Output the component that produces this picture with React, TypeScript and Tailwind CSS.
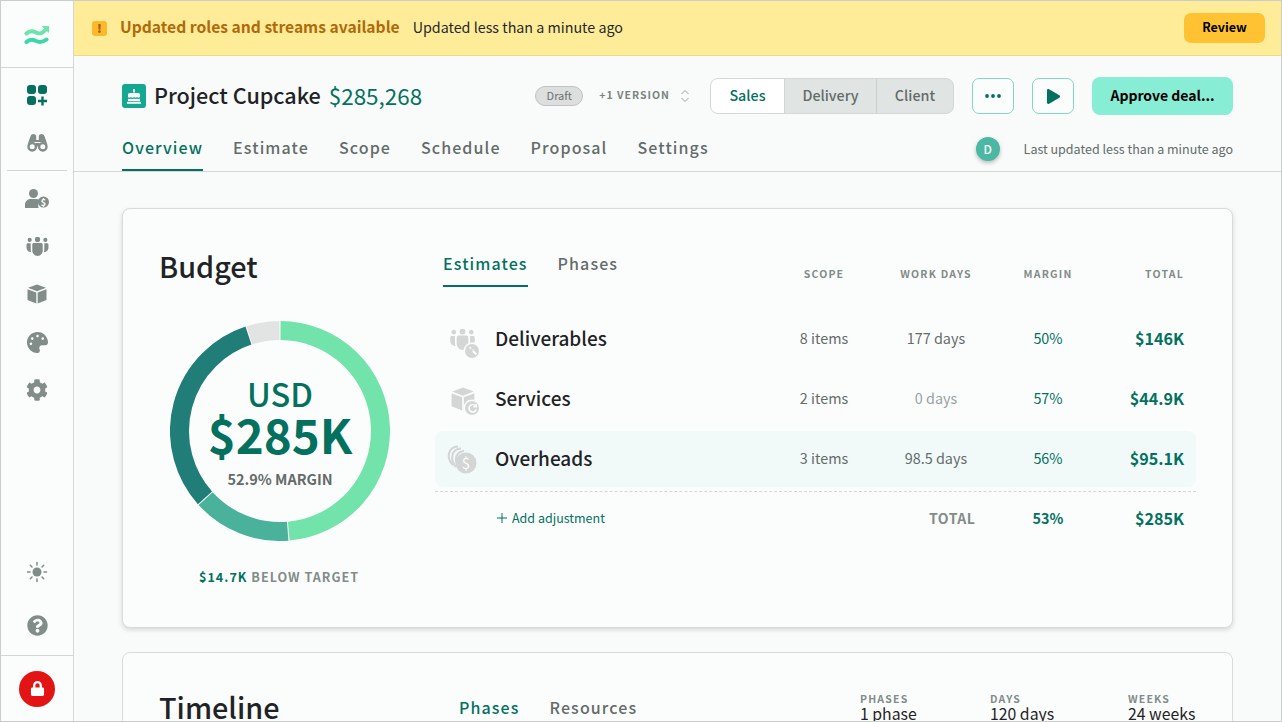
import type { ReactNode } from "react";
import { FaCog, FaExclamation, FaLock, FaPalette, FaPlay, FaQuestionCircle } from "react-icons/fa";

const font = "font-['Noto_Sans_CJK_SC','Noto_Sans',sans-serif]";

function LogoMark() {
  return (
    <svg width="26" height="22" viewBox="0 0 26 22" fill="none" strokeWidth="4" strokeLinecap="round">
      <path d="M2.500 8.500c3-3 5.500-3 9-1.200s6 1.800 9.500-2" stroke="#6fe3ad" />
      <path d="M17.500 1h7.500v7z" fill="#6fe3ad" />
      <path d="M2.500 17c3-3 5.500-3 9-1.200s7 1.800 11-1.300" stroke="#3fd6a9" />
    </svg>
  );
}

function AppsPlus() {
  return (
    <svg width="22" height="22" viewBox="0 0 22 22" fill="#04715f">
      <rect x="1" y="1" width="9" height="9" rx="3" />
      <rect x="12" y="1" width="9" height="9" rx="3" />
      <rect x="1" y="12" width="9" height="9" rx="3" />
      <path d="M15.300 12.500h2.400v3.300h3.300v2.400h-3.300v3.300h-2.400v-3.300H12v-2.400h3.300z" />
    </svg>
  );
}

function Binoculars() {
  return (
    <svg width="21" height="18" viewBox="0 0 21 18" fill="currentColor">
      <path d="M3.500 2.200C4 .8 5.200 0 6.500 0c1.500 0 2.700 1 2.700 2.500V6h2.600V2.500C11.800 1 13 0 14.500 0c1.300 0 2.500.8 3 2.200l2.900 8.300-3.900-2.500h-12L.6 10.500z" />
      <circle cx="5.200" cy="12.800" r="3.700" fill="none" stroke="currentColor" strokeWidth="2.400" />
      <circle cx="15.800" cy="12.800" r="3.700" fill="none" stroke="currentColor" strokeWidth="2.400" />
      <rect x="8.500" y="9" width="4" height="3.500" />
    </svg>
  );
}

function UserDollar() {
  return (
    <svg width="25" height="19" viewBox="0 0 25 19" fill="currentColor">
      <circle cx="8.500" cy="4.500" r="4.500" />
      <path d="M0 19v-3.500C0 12.500 2.500 10 5.500 10h6c1.700 0 3 .7 4 1.800-1.800 1.500-2.800 4.300-2 7.200z" />
      <circle cx="18.500" cy="13" r="5.500" />
      <text x="18.500" y="16.500" textAnchor="middle" fontSize="9" fontWeight="700" fill="#fff">$</text>
    </svg>
  );
}

function Team({ className }: { className: string }) {
  return (
    <svg className={className} viewBox="0 0 22 18" fill="currentColor">
      <circle cx="3.500" cy="2.700" r="2" />
      <circle cx="11" cy="2.200" r="2.500" />
      <circle cx="18.500" cy="2.700" r="2" />
      <path d="M.5 7.500C.5 6.500 1 6 2 6h2.500v6c0 1 .2 1.800.5 2.500C2.500 14.500.5 12.500.5 10z" />
      <path d="M21.500 7.500c0-1-.5-1.500-1.500-1.500h-2.500v6c0 1-.2 1.800-.5 2.500 2.500 0 4.500-2 4.500-4.500z" />
      <path d="M6 7.300C6 6.200 6.700 5.600 7.800 5.600h6.400c1.100 0 1.800.6 1.800 1.700v5.200c0 3-2.200 5.500-5 5.500s-5-2.500-5-5.500z" />
    </svg>
  );
}

function Cube({ className }: { className: string }) {
  return (
    <svg className={className} viewBox="0 0 20 20" fill="currentColor">
      <path d="M10 .5 19 3.800 10 7.200 1 3.800z" />
      <path d="M.5 5.200 9.300 8.600v10.900L.5 16.100z" />
      <path d="M19.500 5.200 10.700 8.600v10.900l8.800-3.400z" />
    </svg>
  );
}

function Sun() {
  return (
    <svg width="22" height="22" viewBox="0 0 22 22" fill="currentColor" stroke="currentColor" strokeWidth="1.500" strokeLinecap="round">
      <circle cx="11" cy="11" r="4.500" stroke="none" />
      <path d="M11 1.500v2.500M11 18v2.500M1.500 11H4M18 11h2.500M4.300 4.300 6 6M16 16l1.700 1.700M4.300 17.700 6 16M16 6l1.700-1.700" />
    </svg>
  );
}

function CakeIcon() {
  return (
    <svg width="14" height="16" viewBox="0 0 14 16" fill="#fff">
      <rect x="6.200" y="1" width="1.600" height="3.500" />
      <path d="M2.500 5h9A1.500 1.500 0 0 1 13 6.500V9c-1 .9-2 .9-3 0-1 .9-2 .9-3 0-1 .9-2 .9-3 0-1 .9-2 .9-3 0V6.500A1.500 1.500 0 0 1 2.500 5z" />
      <path d="M1 10.500c1 .7 2 .7 3 0 1 .7 2 .7 3 0 1 .7 2 .7 3 0 1 .7 2 .7 3 0V13H1z" />
      <rect x="0" y="13.800" width="14" height="2" rx=".5" />
    </svg>
  );
}

function NavIcon({ children, gap }: { children: ReactNode; gap: string }) {
  return <div className={`flex h-6 items-center justify-center text-[#828c89] ${gap}`}>{children}</div>;
}

function Sidebar() {
  return (
    <aside className="flex w-[73px] shrink-0 flex-col border-r border-[#d3d7d6] bg-[#fbfdfc]">
      <div className="flex h-[67px] items-center justify-center border-b border-[#d3d7d6] pt-[4px]">
        <LogoMark />
      </div>
      <div className="flex h-[39px] items-start justify-center pt-[16px]">
        <AppsPlus />
      </div>
      <NavIcon gap="mt-[24px]">
        <Binoculars />
      </NavIcon>
      <div className="mx-[6px] mt-[15px] border-t border-[#d3d7d6]" />
      <NavIcon gap="mt-[15px]">
        <UserDollar />
      </NavIcon>
      <NavIcon gap="mt-[24px]">
        <Team className="h-[19px] w-[23px]" />
      </NavIcon>
      <NavIcon gap="mt-[24px]">
        <Cube className="h-[20px] w-[20px]" />
      </NavIcon>
      <NavIcon gap="mt-[24px]">
        <FaPalette className="text-[21px]" />
      </NavIcon>
      <NavIcon gap="mt-[24px]">
        <FaCog className="text-[22px]" />
      </NavIcon>
      <div className="mt-auto">
        <NavIcon gap="">
          <Sun />
        </NavIcon>
        <NavIcon gap="mt-[29px] mb-[18px]">
          <FaQuestionCircle className="text-[21px]" />
        </NavIcon>
        <div className="flex h-[66px] items-center justify-center border-t border-[#d3d7d6]">
          <span className="flex h-9 w-9 items-center justify-center rounded-full bg-[#e31414]">
            <FaLock className="text-[15px] text-white" />
          </span>
        </div>
      </div>
    </aside>
  );
}

function Banner() {
  return (
    <div className="flex h-[55px] shrink-0 items-center border-b border-[#ecd98a] bg-[#ffec99] pl-[18px] pr-[16px]">
      <span className="flex h-[15px] w-[15px] items-center justify-center rounded-[3px] bg-[#fdb92e]">
        <FaExclamation className="text-[9px] text-[#a8610a]" />
      </span>
      <span className="mb-[2px] ml-[13px] text-[15.650px] font-bold leading-6 text-[#b06a0a]">Updated roles and streams available</span>
      <span className="mb-[2px] ml-[13px] text-[14.300px] leading-6 text-[#24282a]">Updated less than a minute ago</span>
      <button className="ml-auto h-[30px] w-[81px] rounded-[7px] bg-[#ffc233] pb-[2px] text-[12.500px] font-bold leading-none text-black">
        Review
      </button>
    </div>
  );
}

function Header() {
  const tabs = ["Estimate", "Scope", "Schedule", "Proposal", "Settings"];
  return (
    <div className="shrink-0 border-b border-[#d3d7d6] bg-[#f8fbfa] px-[48px]">
      <div className="flex h-[74px] items-center pt-[6px]">
        <span className="flex h-6 w-6 items-center justify-center rounded-[3px] bg-[#14a892]">
          <CakeIcon />
        </span>
        <span className="mb-[2px] ml-2 text-[21.600px] font-medium leading-8 text-[#1f2326]">Project Cupcake</span>
        <span className="mb-[2px] ml-[8px] text-[22.400px] leading-8 text-[#04715f]">$285,268</span>
        <span className="ml-auto flex h-5 w-[48px] items-center justify-center rounded-full border border-[#bfc4c3] bg-[#dcdfde] pb-[2px] text-[11px] leading-none text-[#6a7270]">
          Draft
        </span>
        <span className="mb-[2px] ml-[16px] text-[10.500px] font-bold leading-none tracking-[1px] text-[#7b8482]">+1 VERSION</span>
        <svg className="ml-[10px]" width="10" height="14" viewBox="0 0 10 14" fill="none" stroke="#9aa2a0" strokeWidth="1">
          <path d="M1.500 5 5 1.500 8.500 5M1.500 9 5 12.500 8.500 9" />
        </svg>
        <div className="ml-[20px] flex h-9 w-[244px] overflow-hidden rounded-[8px] border border-[#d3d7d6] bg-[#e0e4e3] text-[14.300px] font-medium leading-none">
          <span className="flex w-[73px] items-center justify-center bg-white pb-[2px] text-[#04715f]">Sales</span>
          <span className="flex w-[92px] items-center justify-center border-l border-[#d3d7d6] pb-[2px] text-[#646c6a]">Delivery</span>
          <span className="flex flex-1 items-center justify-center border-l border-[#c9cecc] pb-[2px] text-[#646c6a]">Client</span>
        </div>
        <button className="ml-[18px] flex h-9 w-[42px] items-center justify-center rounded-[7px] border border-[#7ed9c2] bg-[#fbfdfc]">
          <svg width="16" height="4" viewBox="0 0 16 4" fill="#04715f">
            <circle cx="2" cy="2" r="1.900" />
            <circle cx="8" cy="2" r="1.900" />
            <circle cx="14" cy="2" r="1.900" />
          </svg>
        </button>
        <button className="ml-[18px] flex h-9 w-[42px] items-center justify-center rounded-[7px] border border-[#7ed9c2] bg-[#fbfdfc] text-[#04715f]">
          <FaPlay className="text-[15px]" />
        </button>
        <button className="ml-[18px] h-[38px] w-[141px] rounded-[8px] bg-[#88edd5] pb-[2px] text-[14px] font-bold leading-none text-black">
          Approve deal...
        </button>
      </div>
      <div className="flex h-[41px] items-start">
        <span className="h-[41px] border-b-[2px] border-[#04715f] pt-[5px] text-[16px] font-medium leading-6 tracking-[1.100px] text-[#04715f]">
          Overview
        </span>
        {tabs.map((t) => (
          <span key={t} className="ml-[30px] pt-[5px] text-[16px] font-medium leading-6 tracking-[1.100px] text-[#646c6a]">
            {t}
          </span>
        ))}
        <span className="ml-auto mt-[7px] flex h-6 w-6 items-center justify-center rounded-full bg-[#4bb8a3] text-[12px] font-medium leading-none text-white shadow-[0_2px_4px_rgba(0,0,0,0.25)]">
          D
        </span>
        <span className="ml-[24px] pt-[7px] text-[12.500px] leading-6 text-[#646c6a]">Last updated less than a minute ago</span>
      </div>
    </div>
  );
}

function arc(from: number, to: number) {
  const r = 100.5;
  const pt = (a: number) => {
    const rad = ((a - 90) * Math.PI) / 180;
    return `${110 + r * Math.cos(rad)} ${110 + r * Math.sin(rad)}`;
  };
  return `M${pt(from)}A${r} ${r} 0 ${to - from > 180 ? 1 : 0} 1 ${pt(to)}`;
}

function Donut() {
  const parts = [
    { from: 0, to: 175.3, color: "#72e3aa" },
    { from: 175.3, to: 228, color: "#4ab19a" },
    { from: 228, to: 342, color: "#207d78" },
    { from: 342, to: 360, color: "#e2e4e3" },
  ];
  return (
    <div className="relative h-[220px] w-[220px]">
      <svg width="220" height="220" viewBox="0 0 220 220" fill="none" strokeWidth="19">
        {parts.map((p) => (
          <path key={p.from} d={arc(p.from + 0.3, p.to - 0.3)} stroke={p.color} />
        ))}
      </svg>
      <div className="absolute inset-0 flex flex-col items-center pt-[53px]">
        <span className="text-[32.500px] font-medium leading-[38px] text-[#04715f]">USD</span>
        <span className="mt-[-6px] text-[47.500px] font-bold leading-[56px] text-[#04715f]">$285K</span>
        <span className="mt-[7px] text-[14.500px] font-bold leading-5 text-[#646c6a]">52.9% MARGIN</span>
      </div>
    </div>
  );
}

function Coins() {
  return (
    <svg width="31" height="29" viewBox="0 0 31 29" fill="none">
      <path d="M7 20C-1 12 3 2 12 1.500M10 22C3 14 6 4 15 3.500M13 23C7 15 10 7 18 6" stroke="#d3d6d5" strokeWidth="2" />
      <circle cx="20" cy="18" r="10.500" fill="#d3d6d5" />
      <text x="20" y="23.500" textAnchor="middle" fontSize="15" fill="#fff">$</text>
    </svg>
  );
}

function Wrench() {
  return (
    <svg className="h-[11px] w-[11px]" viewBox="0 0 12 12" fill="#fff">
      <path d="M2 3.500a2.500 2.500 0 0 1 3-1.500L4 3.500 5.500 5 7 4a2.500 2.500 0 0 1-1.500 3L9.500 11 11 9.500 7 5.500z" />
    </svg>
  );
}

function Refresh() {
  return (
    <svg className="h-[11px] w-[11px]" viewBox="0 0 12 12" fill="none" stroke="#fff" strokeWidth="1.600">
      <path d="M9.500 3.500A4 4 0 1 0 10 7" />
      <path d="M10 1v3H7" />
    </svg>
  );
}

function IconBadge({ children, pos }: { children: ReactNode; pos: string }) {
  return (
    <span className={`absolute flex h-[14px] w-[14px] items-center justify-center rounded-full bg-[#d3d6d5] ring-[1.500px] ring-[#fbfdfc] ${pos}`}>
      {children}
    </span>
  );
}

const rows = [
  {
    name: "Deliverables",
    scope: "8 items",
    days: "177 days",
    margin: "50%",
    total: "$146K",
    icon: (
      <>
        <Team className="ml-[3px] h-[21px] w-[27px]" />
        <IconBadge pos="right-[-2px] bottom-[-8px]">
          <Wrench />
        </IconBadge>
      </>
    ),
  },
  {
    name: "Services",
    scope: "2 items",
    days: "0 days",
    margin: "57%",
    total: "$44.9K",
    dim: true,
    icon: (
      <>
        <Cube className="ml-[4px] h-[24px] w-[24px]" />
        <IconBadge pos="right-[-2px] bottom-[-4px]">
          <Refresh />
        </IconBadge>
      </>
    ),
  },
  { name: "Overheads", scope: "3 items", days: "98.5 days", margin: "56%", total: "$95.1K", active: true, icon: <Coins /> },
];

const grid = "grid grid-cols-[333px_112px_112px_112px_1fr] items-center pr-3";

function Budget() {
  return (
    <section className="flex h-[420px] rounded-[8px] border border-[#d8dbda] bg-[#fbfdfc] shadow-[0_2px_5px_rgba(0,0,0,0.14)]">
      <div className="flex w-[312px] shrink-0 flex-col pl-[36px] pt-[37px]">
        <h2 className="text-[28.800px] font-medium leading-10 text-[#1f2326]">Budget</h2>
        <div className="ml-[11px] mt-[35px]">
          <Donut />
        </div>
        <p className="ml-[40px] mt-[28px] text-[12.600px] font-bold leading-4 tracking-[1px] text-[#828c89]">
          <span className="text-[#04715f]">$14.7K</span> BELOW TARGET
        </p>
      </div>
      <div className="w-[761px] shrink-0">
        <div className={`${grid} h-[78px]`}>
          <div className="flex h-full items-end pl-2">
            <span className="border-b-[2px] border-[#04715f] pb-[10px] text-[16px] font-medium leading-6 tracking-[1.100px] text-[#04715f]">Estimates</span>
            <span className="ml-[30px] pb-[12px] text-[16px] font-medium leading-6 tracking-[1.100px] text-[#646c6a]">Phases</span>
          </div>
          {["SCOPE", "WORK DAYS", "MARGIN"].map((h) => (
            <span key={h} className="pt-[52px] text-center text-[10.500px] font-bold leading-4 tracking-[1.200px] text-[#828c89]">
              {h}
            </span>
          ))}
          <span className="pt-[52px] text-right text-[10.500px] font-bold leading-4 tracking-[1.200px] text-[#828c89]">TOTAL</span>
        </div>
        <div className="mt-[24px] flex flex-col gap-1">
          {rows.map((r) => (
            <div key={r.name} className={`${grid} h-14 rounded-[8px] ${r.active ? "bg-[#f2faf9]" : ""}`}>
              <div className="flex items-center">
                <span className="relative ml-[10px] flex w-[32px] justify-center text-[#d3d6d5]">{r.icon}</span>
                <span className="mb-[2px] ml-[18px] text-[19px] font-medium leading-7 text-[#1f2326]">{r.name}</span>
              </div>
              <span className="mb-[2px] text-center text-[14.400px] leading-5 text-[#646c6a]">{r.scope}</span>
              <span className={`mb-[2px] text-center text-[14.400px] leading-5 ${r.dim ? "text-[#9aa2a0]" : "text-[#646c6a]"}`}>{r.days}</span>
              <span className="mb-[2px] text-center text-[14.400px] leading-5 text-[#04715f]">{r.margin}</span>
              <span className="mb-[2px] text-right text-[16.100px] font-bold leading-6 text-[#04715f]">{r.total}</span>
            </div>
          ))}
        </div>
        <div className={`${grid} mt-[4px] h-[54px] border-t border-dashed border-[#d3d7d6]`}>
          <span className="mb-[2px] flex items-center pl-[62px] text-[12.500px] leading-5 text-[#04715f]">
            <svg className="mr-[5px]" width="10" height="10" viewBox="0 0 10 10" stroke="currentColor" strokeWidth="1">
              <path d="M5 0v10M0 5h10" />
            </svg>
            Add adjustment
          </span>
          <span />
          <span className="mb-[2px] pl-[49px] text-[14px] font-bold leading-5 tracking-[0.500px] text-[#828c89]">TOTAL</span>
          <span className="mb-[2px] text-center text-[14.400px] font-bold leading-5 text-[#04715f]">53%</span>
          <span className="mb-[2px] text-right text-[16.100px] font-bold leading-6 text-[#04715f]">$285K</span>
        </div>
      </div>
    </section>
  );
}

function Timeline() {
  const stats = [
    { label: "PHASES", value: "1 phase", w: "w-[130px]" },
    { label: "DAYS", value: "120 days", w: "w-[138px]" },
    { label: "WEEKS", value: "24 weeks", w: "w-[104px]" },
  ];
  return (
    <section className="mt-[24px] flex h-[200px] rounded-[8px] border border-[#d8dbda] bg-[#fbfdfc] pl-[36px] pt-[34px]">
      <h2 className="w-[300px] text-[28.800px] font-medium leading-10 text-[#1f2326]">Timeline</h2>
      <div className="flex h-6 pt-[8px] text-[16px] font-medium leading-6 tracking-[1.100px]">
        <span className="text-[#04715f]">Phases</span>
        <span className="ml-[30px] text-[#646c6a]">Resources</span>
      </div>
      <div className="ml-auto flex pt-[6px]">
        {stats.map((s) => (
          <div key={s.label} className={s.w}>
            <div className="text-[10.500px] font-bold leading-3 tracking-[1.200px] text-[#828c89]">{s.label}</div>
            <div className="mt-[1px] text-[15.800px] leading-4 text-[#1f2326]">{s.value}</div>
          </div>
        ))}
      </div>
    </section>
  );
}

export default function App() {
  return (
    <div className={`flex h-[722px] w-[1282px] overflow-hidden border border-[#c9cdcc] bg-[#f8fbfa] ${font}`}>
      <Sidebar />
      <main className="flex min-w-0 flex-1 flex-col">
        <Banner />
        <Header />
        <div className="overflow-hidden px-[48px] pt-[36px]">
          <Budget />
          <Timeline />
        </div>
      </main>
    </div>
  );
}
